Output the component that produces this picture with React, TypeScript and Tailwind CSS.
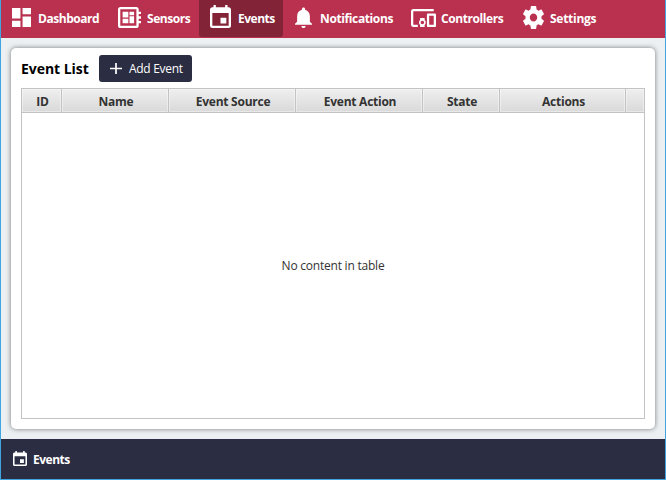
import React from "react";

const EVENT =
  "M17 12h-5v5h5v-5zM16 1v2H8V1H6v2H5c-1.11 0-1.99.9-1.99 2L3 19a2 2 0 0 0 2 2h14c1.1 0 2-.9 2-2V5c0-1.1-.9-2-2-2h-1V1h-2zm3 18H5V8h14v11z";

type IconProps = { d: string; viewBox: string; className: string };

function Icon({ d, viewBox, className }: IconProps) {
  return (
    <svg viewBox={viewBox} preserveAspectRatio="none" fill="currentColor" className={`shrink-0 ${className}`}>
      <path d={d} />
    </svg>
  );
}

const NAV = [
  {
    label: "Dashboard",
    item: "w-[107px] pl-[11px]",
    text: "tracking-[-0.45px]",
    viewBox: "3 3 18 18",
    icon: "w-[19px] h-[19px] mt-[-2px]",
    gap: "w-[7px]",
    d: "M3 13h8V3H3v10zm0 8h8v-6H3v6zm10 0h8V11h-8v10zm0-18v6h8V3h-8z",
  },
  {
    label: "Sensors",
    item: "w-[91px] pl-[10px]",
    text: "tracking-[-0.45px]",
    viewBox: "2 3 20 18",
    icon: "w-[23px] h-[21px] mt-[-2px]",
    gap: "w-[6px]",
    d: "M22 9V7h-2V5c0-1.1-.9-2-2-2H4c-1.1 0-2 .9-2 2v14c0 1.1.9 2 2 2h14c1.1 0 2-.9 2-2v-2h2v-2h-2v-2h2v-2h-2V9h2zm-4 10H4V5h14v14zM6 13h5v4H6zm6-6h4v3h-4zM6 7h5v5H6zm6 4h4v6h-4z",
  },
  {
    label: "Events",
    item: "w-[84px] pl-[11px] bg-[#832337] rounded-b-[3px]",
    text: "tracking-[-0.5px]",
    viewBox: "3 1 18 20",
    icon: "w-[21px] h-[23px] mt-[-4px]",
    gap: "w-[7px]",
    d: EVENT,
  },
  {
    label: "Notifications",
    item: "w-[119px] pl-[12px]",
    text: "tracking-[-0.38px]",
    viewBox: "4 2 16 20",
    icon: "w-[17px] h-[21px] mt-[-2px]",
    gap: "w-[8px]",
    d: "M12 22c1.1 0 2-.9 2-2h-4c0 1.1.89 2 2 2zm6-6v-5c0-3.07-1.64-5.64-4.5-6.32V4c0-.83-.67-1.5-1.5-1.5s-1.5.67-1.5 1.5v.68C7.63 5.36 6 7.92 6 11v5l-2 2v1h16v-1l-2-2z",
  },
  {
    label: "Controllers",
    item: "w-[111px] pl-[9px]",
    text: "tracking-[-0.42px]",
    viewBox: "1 4 22 16",
    icon: "w-[25px] h-[18px] mt-[-1px]",
    gap: "w-[5px]",
    d: "M3 6h18V4H3c-1.1 0-2 .9-2 2v12c0 1.1.9 2 2 2h4v-2H3V6zm10 6H9v1.78c-.61.55-1 1.33-1 2.22s.39 1.67 1 2.22V20h4v-1.78c.61-.55 1-1.34 1-2.22s-.39-1.67-1-2.22V12zm-2 5.5c-.83 0-1.5-.67-1.5-1.5s.67-1.5 1.5-1.5 1.5.67 1.5 1.5-.67 1.5-1.5 1.5zM22 8h-6c-.5 0-1 .5-1 1v10c0 .5.5 1 1 1h6c.5 0 1-.5 1-1V9c0-.5-.5-1-1-1zm-1 10h-4v-8h4v8z",
  },
  {
    label: "Settings",
    item: "w-[93px] pl-[10px]",
    text: "tracking-[-0.28px]",
    viewBox: "2.2 2 19.6 20",
    icon: "w-[21px] h-[23px] mt-[-2px]",
    gap: "w-[6px]",
    d: "M19.43 12.98c.04-.32.07-.64.07-.98s-.03-.66-.07-.98l2.11-1.65c.19-.15.24-.42.12-.64l-2-3.46c-.12-.22-.39-.3-.61-.22l-2.49 1c-.52-.4-1.08-.73-1.69-.98l-.38-2.65C14.46 2.18 14.25 2 14 2h-4c-.25 0-.46.18-.49.42l-.38 2.65c-.61.25-1.17.59-1.69.98l-2.49-1c-.23-.09-.49 0-.61.22l-2 3.46c-.13.22-.07.49.12.64l2.11 1.65c-.04.32-.07.65-.07.98s.03.66.07.98l-2.11 1.65c-.19.15-.24.42-.12.64l2 3.46c.12.22.39.3.61.22l2.49-1c.52.4 1.08.73 1.69.98l.38 2.65c.03.24.24.42.49.42h4c.25 0 .46-.18.49-.42l.38-2.65c.61-.25 1.17-.59 1.69-.98l2.49 1c.23.09.49 0 .61-.22l2-3.46c.12-.22.07-.49-.12-.64l-2.11-1.65zM12 15.5c-1.93 0-3.5-1.57-3.5-3.5s1.57-3.5 3.5-3.5 3.5 1.57 3.5 3.5-1.57 3.5-3.5 3.5z",
  },
];

const COLUMNS = [
  { label: "ID", width: "w-[40px]" },
  { label: "Name", width: "w-[107px]" },
  { label: "Event Source", width: "w-[127px]" },
  { label: "Event Action", width: "w-[127px]" },
  { label: "State", width: "w-[77px]" },
  { label: "Actions", width: "w-[126px]" },
];

export default function App() {
  return (
    <div className="flex h-[480px] w-[666px] flex-col overflow-hidden border-x border-b border-[#41a5e1] bg-[#ecf0f3] font-['Open_Sans','Noto_Sans',sans-serif] text-[12px] leading-4">
      <nav className="flex h-[38px] shrink-0 bg-[#b9314f] font-bold text-white">
        {NAV.map((n) => (
          <div key={n.label} className={`flex h-[37px] shrink-0 items-center ${n.item}`}>
            <Icon d={n.d} viewBox={n.viewBox} className={n.icon} />
            <span className={`shrink-0 ${n.gap}`} />
            <span className={`whitespace-nowrap ${n.text}`}>{n.label}</span>
          </div>
        ))}
      </nav>

      <main className="flex min-h-0 flex-1 px-[10px] py-[10px]">
        <section className="flex w-[644px] flex-col rounded-[5px] bg-white px-[10px] pt-[7px] pb-[10px] shadow-[0_0_5px_rgba(0,0,0,0.5)]">
          <div className="flex h-[27px] items-center">
            <h1 className="w-[78px] whitespace-nowrap text-[14px] font-bold tracking-[-0.05px] text-black">Event List</h1>
            <button className="flex h-[27px] w-[93px] items-center rounded-[3px] bg-[#2b2d42] pl-[11px] text-white">
              <Icon d="M19 13h-6v6h-2v-6H5v-2h6V5h2v6h6v2z" viewBox="5 5 14 14" className="h-[11px] w-[12px]" />
              <span className="ml-[7px] whitespace-nowrap tracking-[-0.3px]">Add Event</span>
            </button>
          </div>

          <div className="mt-[6px] flex min-h-0 flex-1 flex-col border border-[#c3c3c3]">
            <div className="flex h-[24px] shrink-0 border-b border-[#c3c3c3] font-bold text-[#333333]">
              {COLUMNS.map((c) => (
                <div
                  key={c.label}
                  className={`flex shrink-0 items-center justify-center border-r border-r-[#c3c3c3] bg-linear-to-b from-[#efefef] to-[#d9d9d9] pt-[2px] pl-[2px] shadow-[inset_0_0_0_1px_rgba(255,255,255,0.4)] ${c.width}`}
                >
                  <span className="whitespace-nowrap tracking-[-0.25px]">{c.label}</span>
                </div>
              ))}
              <div className="flex-1 bg-linear-to-b from-[#efefef] to-[#d9d9d9] shadow-[inset_0_0_0_1px_rgba(255,255,255,0.4)]" />
            </div>
            <div className="flex flex-1 items-center justify-center pt-px text-[#333333]">
              <span className="tracking-[-0.22px]">No content in table</span>
            </div>
          </div>
        </section>
      </main>

      <footer className="flex h-[40px] shrink-0 items-center bg-[#2b2d42] pl-[12px] font-bold text-white">
        <Icon d={EVENT} viewBox="3 1 18 20" className="-mt-px h-[15px] w-[14px]" />
        <span className="mt-[2px] ml-[6px] tracking-[-0.5px]">Events</span>
      </footer>
    </div>
  );
}
